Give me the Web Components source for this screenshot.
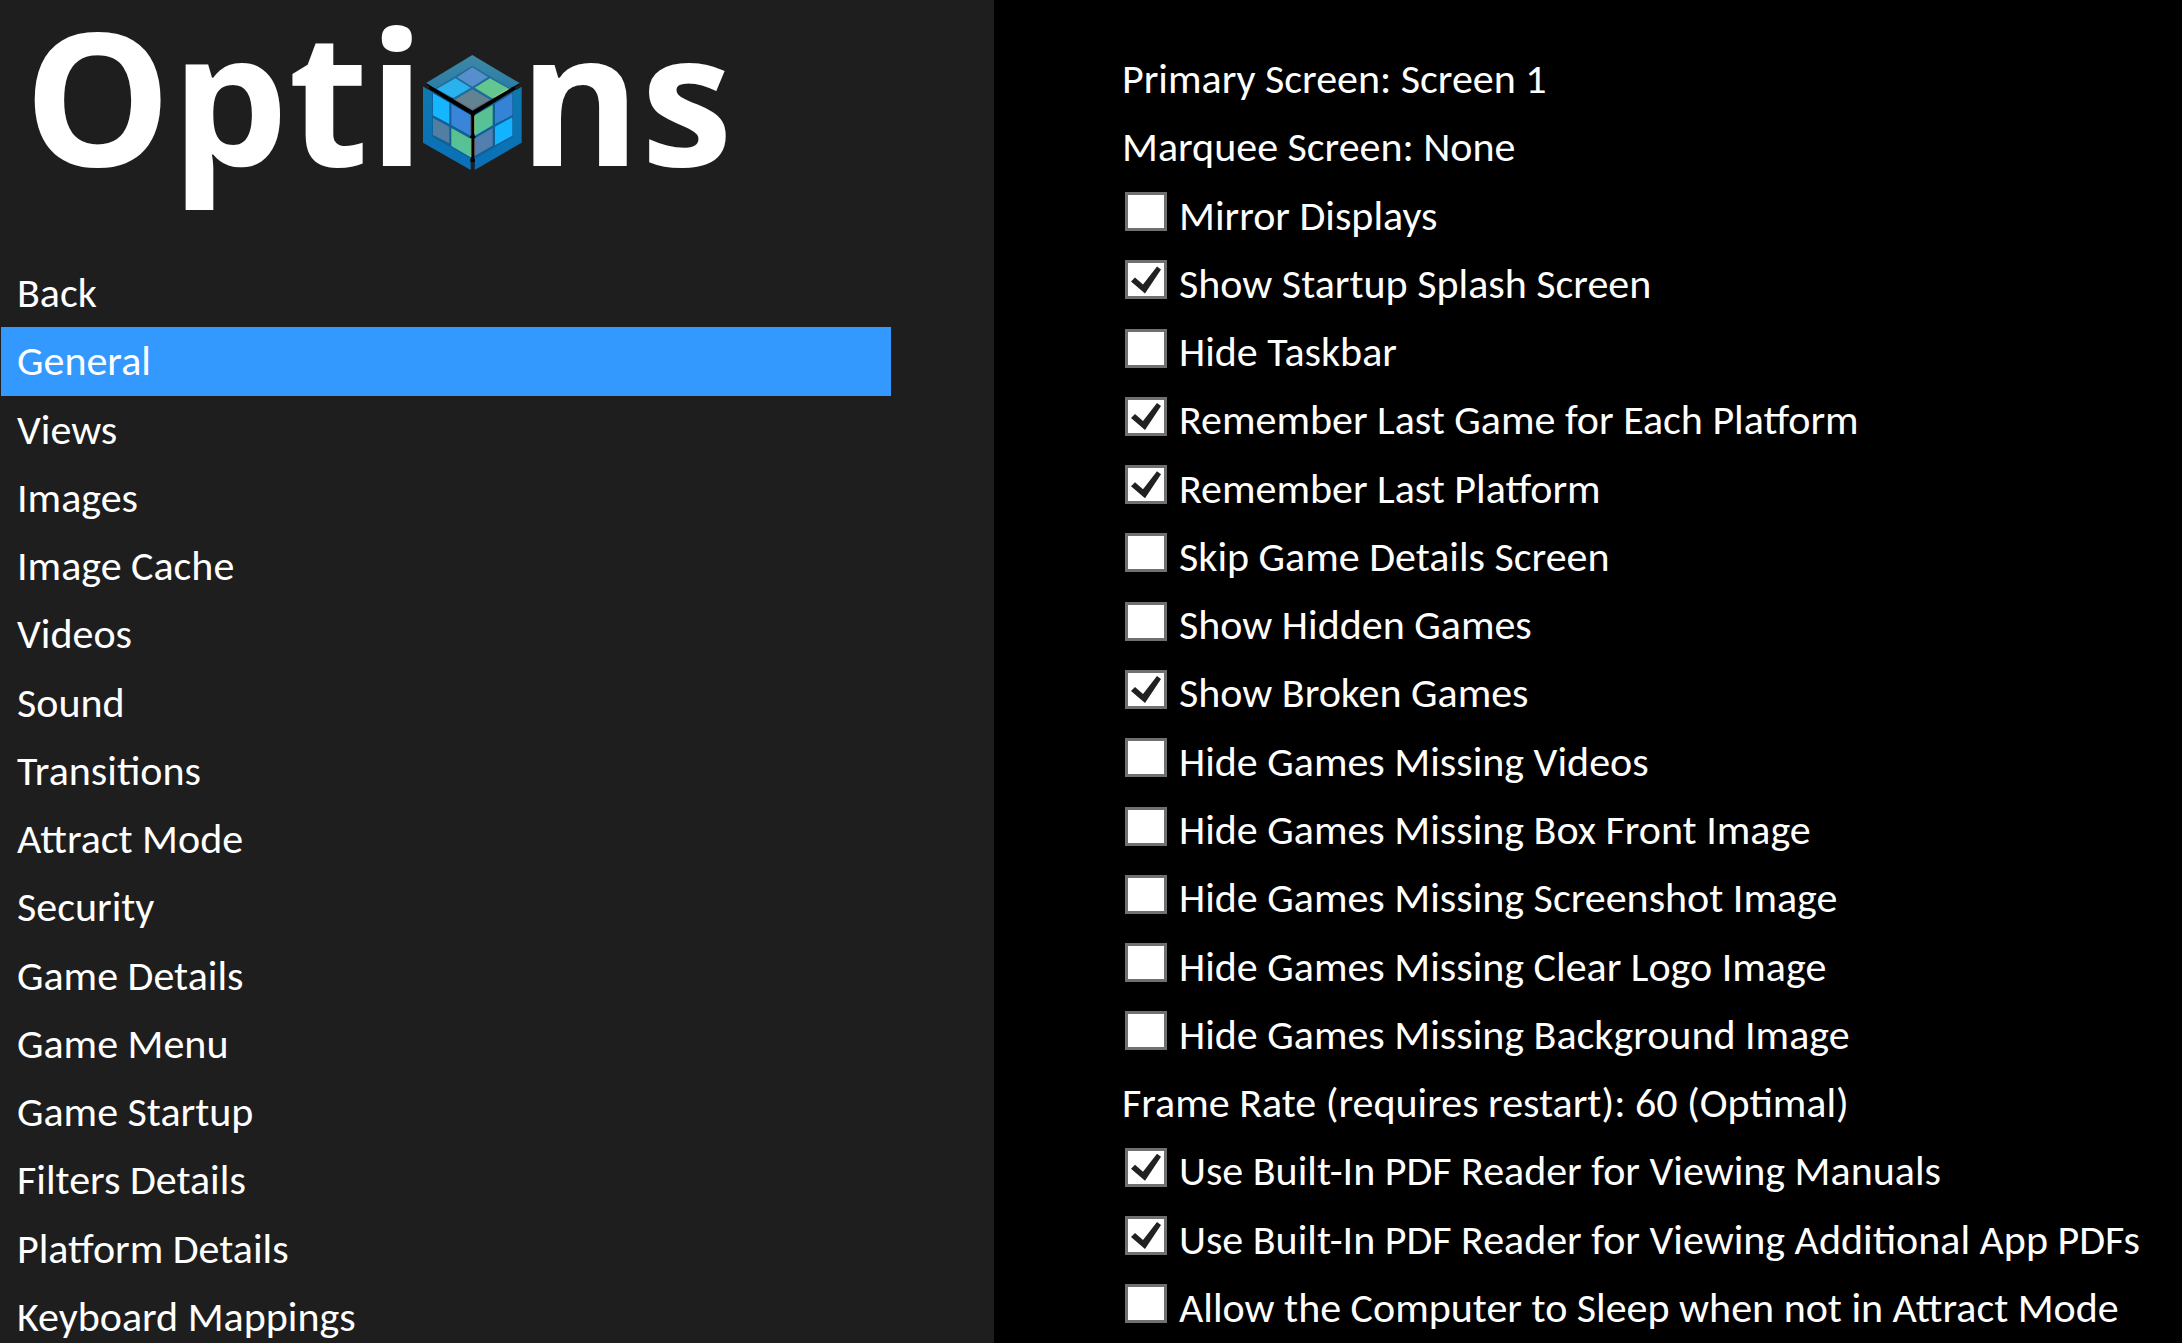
<!DOCTYPE html>
<html lang="en">
<head>
<meta charset="utf-8">
<title>Options</title>
<style>
html, body { margin: 0; height: 100%; background: #000; }
body { color: #fff; font: 42px/68px Carlito, Calibri, Lato, sans-serif; overflow: hidden; }
</style>
</head>
<body>
<options-screen></options-screen>
<script>
class CubeLogo extends HTMLElement {
  constructor() {
    super();
    this.attachShadow({ mode: 'open' }).innerHTML = `
<style>:host{display:block} svg{display:block;width:100%;height:100%}</style>
<svg viewBox="39 30 297 345" aria-hidden="true">
<defs>
<linearGradient id="t" x1="0" y1="0" x2="0" y2="1"><stop offset="0" stop-color="#3e88a4"/><stop offset="1" stop-color="#1f76a8"/></linearGradient>
<linearGradient id="s" x1="0" y1="0" x2="0" y2="1"><stop offset="0" stop-color="#0d78ae"/><stop offset="1" stop-color="#0a70b8"/></linearGradient>
<linearGradient id="g" x1="0" y1="0" x2="0" y2="1"><stop offset="0" stop-color="#5cc08b"/><stop offset="1" stop-color="#52c3a0"/></linearGradient>
</defs>
<path fill="#000" d="M60 125L187 190L315 125L330 122L193 210V345H181V210L45 122Z"/>
<path fill="url(#t)" d="M187 30L330 115L187 198L47 115Z"/>
<path fill="url(#s)" d="M39 124L182 209V375L39 293Z"/>
<path fill="url(#s)" d="M335 124L194 209V375L335 293Z"/>
<path fill="#1e6c9c" d="M187 62L302 131L187 198L74 131Z"/>
<path fill="#115f97" d="M67 141L182 209V341L67 275ZM309 141L194 209V341L309 275Z"/>
<path fill="#578fcd" d="M187 67L234 96L187 125L141 97Z"/>
<path fill="#29b2ed" d="M136 100L182 128L130 159L80 132Z"/>
<path fill="#62c68e" d="M240 100L298 132L246 160L194 128Z"/>
<path fill="#628392" d="M187 133L240 164L187 195L134 164Z"/>
<path fill="#16b5ff" d="M69 145L118 173V237L69 211Z"/>
<path fill="#3985d9" d="M124 178L182 211V272L124 240Z"/>
<path fill="#527fa1" d="M69 219L118 245V295L69 270Z"/>
<path fill="url(#g)" d="M124 249L182 281V337L124 303Z"/>
<path fill="url(#g)" d="M195 211L248 180V241L195 272Z"/>
<path fill="#3583d7" d="M255 176L307 145V211L255 237Z"/>
<path fill="#527fad" d="M195 280L248 249V302L195 332Z"/>
<path fill="#12b4ff" d="M255 245L307 217V272L255 301Z"/>
<path fill="none" stroke="#000" stroke-width="8" d="M47 118L188 202L330 118M188 202V347"/>
<path fill="none" stroke="#1e1e1e" stroke-width="10" d="M37 117L57 129M339 117L316 131M188 349V380"/>
<path fill="#000" d="M120 161L126 158L132 165L130 172L120 167ZM60 128L68 127L74 134L68 139L60 134ZM302 129L308 125L315 132L308 139ZM181 342h14v8h-14ZM180 274l8-4 8 4v5h-16Z"/>
<path fill="none" stroke="#d7e34c" stroke-width="2" d="M183 280V336M194 213V267M250 158L294 133"/>
<path fill="none" stroke="#8f4f43" stroke-width="2" d="M139 166L187 194L237 166M194 281V332M183 214V270"/>
</svg>`;
  }
}

class ScreenTitle extends HTMLElement {
  constructor() {
    super();
    this.attachShadow({ mode: 'open' }).innerHTML = `
<style>
:host{display:block;height:259px;flex:none}
h1{margin:0;padding:0 24px;display:flex;align-items:baseline;font:700 185px/188px "Open Sans","Noto Sans",sans-serif}
cube-logo{width:99px;height:115px;margin:55px -3px 0 -2px;align-self:flex-start}
</style>
<h1 aria-label="Options"><slot name="before"></slot><cube-logo></cube-logo><slot name="after"></slot></h1>`;
  }
}

class MenuItem extends HTMLElement {
  constructor() {
    super();
    this.attachShadow({ mode: 'open' }).innerHTML = `
<style>
:host{display:block;min-height:0}
button{display:flex;align-items:center;width:100%;height:100%;margin:0;border:0;padding:0 0 0 var(--item-indent,1px);background:none;color:inherit;font:inherit;text-align:left;white-space:nowrap;cursor:pointer}
:host([selected]) button{background:#3399ff}
</style>
<button type="button"><slot></slot></button>`;
  }
}

class CheckOption extends HTMLElement {
  constructor() {
    super();
    this.attachShadow({ mode: 'open' }).innerHTML = `
<style>
:host{display:block;min-height:0}
label{display:flex;align-items:center;height:100%;gap:12px;padding-left:4px;white-space:nowrap}
input{appearance:none;flex:none;box-sizing:border-box;width:42px;height:39px;margin:0 0 8px;border:3px solid #707070;border-radius:0;background:#fff}
input:checked::before{content:"";display:block;width:36px;height:33px;background:#212121;clip-path:polygon(3px 18px,7px 14px,15px 21px,29px 3px,33px 6px,17px 30px)}
</style>
<label><input type="checkbox"><span><slot></slot></span></label>`;
  }
  connectedCallback() {
    this.shadowRoot.querySelector('input').checked = this.hasAttribute('checked');
  }
}

class OptionsScreen extends HTMLElement {
  constructor() {
    super();
    const menu = ['Back', 'General', 'Views', 'Images', 'Image Cache', 'Videos', 'Sound', 'Transitions', 'Attract Mode', 'Security', 'Game Details', 'Game Menu', 'Game Startup', 'Filters Details', 'Platform Details', 'Keyboard Mappings'];
    // [label, checked]; entries without a state are value rows
    const options = [
      ['Primary Screen: Screen 1'], ['Marquee Screen: None'],
      ['Mirror Displays', false], ['Show Startup Splash Screen', true],
      ['Hide Taskbar', false], ['Remember Last Game for Each Platform', true],
      ['Remember Last Platform', true], ['Skip Game Details Screen', false],
      ['Show Hidden Games', false], ['Show Broken Games', true],
      ['Hide Games Missing Videos', false], ['Hide Games Missing Box Front Image', false],
      ['Hide Games Missing Screenshot Image', false], ['Hide Games Missing Clear Logo Image', false],
      ['Hide Games Missing Background Image', false], ['Frame Rate (requires restart): 60 (Optimal)'],
      ['Use Built-In PDF Reader for Viewing Manuals', true],
      ['Use Built-In PDF Reader for Viewing Additional App PDFs', true],
      ['Allow the Computer to Sleep when not in Attract Mode', false]
    ];
    this.attachShadow({ mode: 'open' }).innerHTML = `
<style>
:host{display:grid;grid-template-columns:994fr 1188fr;height:100vh;overflow:hidden}
aside{display:flex;flex-direction:column;min-width:0;min-height:0;background:#1e1e1e}
nav,main{display:grid;grid-auto-rows:1fr;min-width:0;min-height:0}
nav{flex:1;width:89.6%;padding-left:1px;margin-bottom:-8px;box-sizing:border-box;--item-indent:16px}
main{padding:45px 0 1px 127px;background:#000}
</style>
<aside>
<screen-title><span slot="before">Opti</span><span slot="after">ns</span></screen-title>
<nav aria-label="Option groups">${menu.map(m => `<menu-item${m === 'General' ? ' selected' : ''}>${m}</menu-item>`).join('')}</nav>
</aside>
<main>${options.map(([t, on]) => on === undefined ? `<menu-item>${t}</menu-item>` : `<check-option${on ? ' checked' : ''}>${t}</check-option>`).join('')}</main>`;
  }
}

customElements.define('cube-logo', CubeLogo);
customElements.define('screen-title', ScreenTitle);
customElements.define('menu-item', MenuItem);
customElements.define('check-option', CheckOption);
customElements.define('options-screen', OptionsScreen);
</script>
</body>
</html>
